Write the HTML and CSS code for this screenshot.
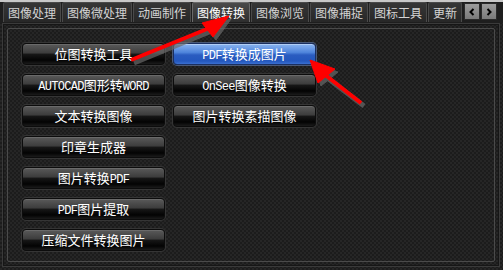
FILE: index.html
```html
<!DOCTYPE html>
<html>
<head>
<meta charset="utf-8">
<link rel="stylesheet" href="styles.css">
</head>
<body>
<div class="app">
  <div class="tabbar">
    <div class="tabs">
      <div class="tab">图像处理</div>
      <div class="tab">图像微处理</div>
      <div class="tab">动画制作</div>
      <div class="tab active">图像转换</div>
      <div class="tab">图像浏览</div>
      <div class="tab">图像捕捉</div>
      <div class="tab">图标工具</div>
      <div class="tab">更新</div>
    </div>
    <div class="scroll">
      <div class="sbtn"><svg width="8" height="8" viewBox="0 0 8 8"><path d="M5.5 1 L2.5 4 L5.5 7" fill="none" stroke="#000" stroke-width="2"/></svg></div>
      <div class="sbtn"><svg width="8" height="8" viewBox="0 0 8 8"><path d="M2.5 1 L5.5 4 L2.5 7" fill="none" stroke="#000" stroke-width="2"/></svg></div>
    </div>
  </div>
  <div class="panel">
    <div class="frame">
      <div class="col">
        <div class="btn">位图转换工具</div>
        <div class="btn"><span class="lat">AUTOCAD</span>图形转<span class="lat">WORD</span></div>
        <div class="btn">文本转换图像</div>
        <div class="btn">印章生成器</div>
        <div class="btn">图片转换<span class="lat">PDF</span></div>
        <div class="btn"><span class="lat">PDF</span>图片提取</div>
        <div class="btn">压缩文件转换图片</div>
      </div>
      <div class="col">
        <div class="btn blue"><span class="lat">PDF</span>转换成图片</div>
        <div class="btn"><span class="lat">OnSee</span>图像转换</div>
        <div class="btn">图片转换素描图像</div>
      </div>
    </div>
  </div>
  <svg class="arrows" width="503" height="270" viewBox="0 0 503 270">
    <g fill="#6a6a6a" stroke="#6a6a6a" opacity="0.7">
      <line x1="134" y1="63" x2="214" y2="30" stroke-width="5"/>
      <polygon points="231,19 205,26 216,40"/>
      <line x1="364" y1="106" x2="326" y2="77" stroke-width="5"/>
      <polygon points="313,63 321,86 338,72"/>
    </g>
    <g fill="#f00" stroke="#f00">
      <line x1="131" y1="60" x2="212" y2="27" stroke-width="4"/>
      <polygon points="229,16 202,23 213,37"/>
      <line x1="361" y1="103" x2="324" y2="74" stroke-width="4"/>
      <polygon points="310,60 318,83 335,69"/>
    </g>
  </svg>
</div>
</body>
</html>
```

FILE: styles.css
```css
html, body {
  margin: 0;
  padding: 0;
}
body {
  width: 503px;
  height: 270px;
  overflow: hidden;
  background: #1b1b1b;
  font-family: "Noto Sans CJK SC", "Noto Sans", sans-serif;
}
.app {
  position: relative;
  width: 503px;
  height: 270px;
  background-color: #1f1f1f;
  background-image: repeating-conic-gradient(#1c1c1c 0 25%, #262626 0 50%);
  background-size: 4px 4px;
}
.tabbar {
  display: flex;
  height: 23px;
  background: linear-gradient(#c8c8c8 0, #c8c8c8 2px, #1e1e1e 2px);
}
.tabs {
  flex: 1;
  display: flex;
  gap: 1px;
  padding-left: 3px;
  padding-top: 2px;
  overflow: hidden;
}
.tab {
  flex: none;
  height: 19px;
  padding: 0 4px;
  border: 1px solid #4a4a4a;
  border-bottom: none;
  border-radius: 2px 2px 0 0;
  background: linear-gradient(#363636, #272727);
  color: #d4d4d4;
  font-size: 12px;
  line-height: 19px;
  white-space: nowrap;
}
.tab.active {
  background: linear-gradient(#4a4a4a, #2e2e2e);
  border-color: #6a6a6a;
  color: #fff;
}
.scroll {
  flex: none;
  display: flex;
  gap: 1px;
  padding: 3px 6px 0 0;
}
.sbtn {
  width: 16px;
  height: 17px;
  display: flex;
  align-items: center;
  justify-content: center;
  border: 1px solid #2a2a2a;
  background: linear-gradient(#9c9c9c, #7a7a7a);
  box-sizing: border-box;
}
.panel {
  margin: 0 3px 0 2px;
  height: 244px;
  border: 1px solid #3a3a3a;
  padding: 4px;
  box-sizing: border-box;
  box-shadow: inset 0 0 0 1px #161616;
}
.frame {
  height: 100%;
  box-sizing: border-box;
  border: 1px solid #4a4a4a;
  border-radius: 2px;
  padding: 14px 14px;
  display: flex;
  gap: 8px;
  align-items: flex-start;
}
.col {
  display: flex;
  flex-direction: column;
  gap: 9px;
}
.btn {
  width: 143px;
  height: 22px;
  box-sizing: border-box;
  border-radius: 4px;
  border: 1px solid #0c0c0c;
  box-shadow: 0 0 0 1px #353535, inset 0 1px 0 #6a6a6a;
  background: linear-gradient(#5a5a5a 0%, #3d3d3d 44%, #161616 52%, #030303 80%, #1b1b1b 100%);
  color: #fff;
  font-size: 13px;
  line-height: 20px;
  text-align: center;
  white-space: nowrap;
}
.btn.blue {
  background: linear-gradient(#8ab4f0 0%, #4f85dc 42%, #2a5cc0 55%, #2357bd 85%, #3a6fd0 100%);
  box-shadow: 0 0 0 1px #4a5a78, inset 0 1px 0 #b0cdf5;
  border-color: #1a2f60;
}
.lat {
  font-family: "Liberation Mono", "Courier New", monospace;
  font-size: 12px;
  letter-spacing: -0.7px;
}
.arrows {
  position: absolute;
  left: 0;
  top: 0;
  pointer-events: none;
}
```
